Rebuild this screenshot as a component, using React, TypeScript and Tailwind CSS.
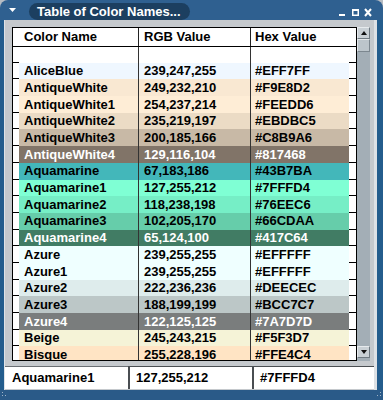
type ColorRow = {
  name: string;
  rgb: string;
  hex: string;
  bg: string;
  dark?: boolean;
};

const rows: ColorRow[] = [
  { name: 'AliceBlue', rgb: '239,247,255', hex: '#EFF7FF', bg: 'bg-[#EFF7FF]' },
  { name: 'AntiqueWhite', rgb: '249,232,210', hex: '#F9E8D2', bg: 'bg-[#F9E8D2]' },
  { name: 'AntiqueWhite1', rgb: '254,237,214', hex: '#FEEDD6', bg: 'bg-[#FEEDD6]' },
  { name: 'AntiqueWhite2', rgb: '235,219,197', hex: '#EBDBC5', bg: 'bg-[#EBDBC5]' },
  { name: 'AntiqueWhite3', rgb: '200,185,166', hex: '#C8B9A6', bg: 'bg-[#C8B9A6]' },
  { name: 'AntiqueWhite4', rgb: '129,116,104', hex: '#817468', bg: 'bg-[#817468]', dark: true },
  { name: 'Aquamarine', rgb: '67,183,186', hex: '#43B7BA', bg: 'bg-[#43B7BA]' },
  { name: 'Aquamarine1', rgb: '127,255,212', hex: '#7FFFD4', bg: 'bg-[#7FFFD4]' },
  { name: 'Aquamarine2', rgb: '118,238,198', hex: '#76EEC6', bg: 'bg-[#76EEC6]' },
  { name: 'Aquamarine3', rgb: '102,205,170', hex: '#66CDAA', bg: 'bg-[#66CDAA]' },
  { name: 'Aquamarine4', rgb: '65,124,100', hex: '#417C64', bg: 'bg-[#417C64]', dark: true },
  { name: 'Azure', rgb: '239,255,255', hex: '#EFFFFF', bg: 'bg-[#EFFFFF]' },
  { name: 'Azure1', rgb: '239,255,255', hex: '#EFFFFF', bg: 'bg-[#EFFFFF]' },
  { name: 'Azure2', rgb: '222,236,236', hex: '#DEECEC', bg: 'bg-[#DEECEC]' },
  { name: 'Azure3', rgb: '188,199,199', hex: '#BCC7C7', bg: 'bg-[#BCC7C7]' },
  { name: 'Azure4', rgb: '122,125,125', hex: '#7A7D7D', bg: 'bg-[#7A7D7D]', dark: true },
  { name: 'Beige', rgb: '245,243,215', hex: '#F5F3D7', bg: 'bg-[#F5F3D7]' },
  { name: 'Bisque', rgb: '255,228,196', hex: '#FFE4C4', bg: 'bg-[#FFE4C4]' },
];

const Row = ({ row, first }: { row?: ColorRow; first?: boolean }) => (
  <div className={`flex ${first ? 'h-[15.7px]' : 'h-[16.7px]'}`}>
    <div className="w-[6px] border-b border-black" />
    <div className={`flex flex-1 items-center ${row ? row.bg : 'bg-white'} ${row?.dark ? 'text-white' : 'text-black'}`}>
      <div className="flex h-full w-[120px] items-center border-r border-[#333] pl-[5px]">{row?.name}</div>
      <div className="flex h-full w-[112px] items-center border-r border-[#333] pl-[5px]">{row?.rgb}</div>
      <div className="flex h-full flex-1 items-center pl-[4px]">{row?.hex}</div>
    </div>
    <div className="w-[7px] border-b border-black" />
  </div>
);

const ScrollButton = ({ up }: { up?: boolean }) => (
  <div className="flex h-[12px] items-center justify-center border-t border-l border-[#e6eaed] border-r-[#6f7a82] border-b-[#6f7a82] border-r border-b bg-[#c9d0d5]">
    <svg width="6" height="4" viewBox="0 0 6 4">
      <polygon points={up ? '0,4 6,4 3,0' : '0,0 6,0 3,4'} fill="#111" />
    </svg>
  </div>
);

export default function App() {
  const picked = rows[7];
  return (
    <div className="h-[400px] w-[383px] bg-[#b6bcc3] font-['Liberation_Sans',Arial,sans-serif] text-[13px] font-bold">
      <div className="flex h-full flex-col">
        {/* title bar */}
        <div className="flex h-[20px] items-center rounded-t-[8px] bg-[#2f6090] text-white">
          <svg className="ml-[9px]" width="7" height="4" viewBox="0 0 7 4">
            <polygon points="0,0 7,0 3.5,4" fill="white" />
          </svg>
          <div className="ml-[13px] mt-[3px] flex h-[17px] w-[161px] items-center rounded-full bg-[#1c3f60] pl-[8px]">
            Table of Color Names...
          </div>
          <svg className="ml-auto mr-[11px]" width="33" height="20" viewBox="0 0 33 20">
            <rect x="0" y="14" width="6" height="2" fill="white" />
            <rect x="13.75" y="9.75" width="5.5" height="5.5" fill="none" stroke="white" strokeWidth="1.5" />
            <rect x="13" y="9" width="7" height="2" fill="white" />
            <path d="M26 9 L32 16 M32 9 L26 16" stroke="white" strokeWidth="2" />
          </svg>
        </div>

        <div className="flex flex-1">
          <div className="w-[5px] border-r border-[#dfe3e7] bg-[#245d8d]" />
          <div className="flex flex-1 flex-col bg-[#c5c9cd] pt-[7px]">
            <div className="flex pl-[7px]">
              <div className="h-[334px] w-[345px] overflow-hidden border border-black bg-white">
                <div className="flex h-[19px] border-b border-black">
                  <div className="flex w-[126px] items-center border-r border-[#222] pl-[11px]">Color Name</div>
                  <div className="flex w-[112px] items-center border-r border-[#222] pl-[5px]">RGB Value</div>
                  <div className="flex flex-1 items-center pl-[4px]">Hex Value</div>
                </div>
                <Row first />
                {rows.map((r) => (
                  <Row key={r.name} row={r} />
                ))}
              </div>
              <div className="flex h-[334px] w-[13px] flex-col bg-[#a3aeb6]">
                <ScrollButton up />
                <div className="h-[13px] border border-[#e2e6e9] border-r-[#7c878f] border-b-[#7c878f] bg-[#bcc5cb]" />
                <div className="flex-1" />
                <ScrollButton />
                <div className="h-[3px]" />
              </div>
            </div>

            {/* selected row fields */}
            <div className="mt-[5px] flex h-[23px] bg-white">
              <div className="flex w-[123px] items-center border-t border-[#6a6f74] pl-[7px]">{picked.name}</div>
              <div className="flex w-[124px] items-center border-t border-l-2 border-[#4a4e52] pl-[6px]">{picked.rgb}</div>
              <div className="flex flex-1 items-center border-t border-l-2 border-[#4a4e52] pl-[6px]">{picked.hex}</div>
            </div>
          </div>
          <div className="w-[9px] border-l-[3px] border-[#dde1e5] bg-[#245d8d]" />
        </div>

        <div className="flex h-[10px] items-start justify-between bg-[#2a5a88]">
          <svg className="ml-[2px] mt-[2px]" width="8" height="6" viewBox="0 0 8 6">
            <rect x="0" y="0" width="1" height="1" fill="#9fb4c8" />
            <rect x="0" y="3" width="1" height="1" fill="#9fb4c8" />
            <rect x="3" y="3" width="1" height="1" fill="#9fb4c8" />
          </svg>
          <svg className="mr-[2px] mt-[2px]" width="8" height="6" viewBox="0 0 8 6">
            <rect x="7" y="0" width="1" height="1" fill="#9fb4c8" />
            <rect x="7" y="3" width="1" height="1" fill="#9fb4c8" />
            <rect x="4" y="3" width="1" height="1" fill="#9fb4c8" />
          </svg>
        </div>
      </div>
    </div>
  );
}
